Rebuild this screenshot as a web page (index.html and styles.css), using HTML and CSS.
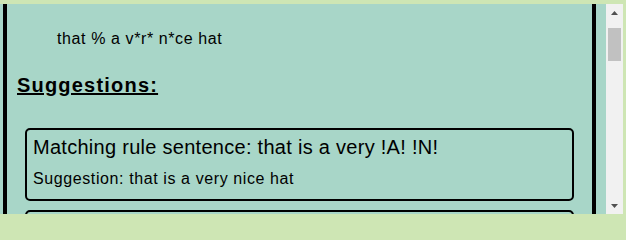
FILE: index.html
```html
<!DOCTYPE html>
<html>
<head>
<meta charset="utf-8">
<link rel="stylesheet" href="styles.css">
</head>
<body>
<div class="frame">
  <div class="viewport">
    <div class="panel">
      <blockquote class="input-line">that % a v*r* n*ce hat</blockquote>
      <h2 class="heading">Suggestions:</h2>
      <div class="suggestion">
        <div class="rule">Matching rule sentence: that is a very !A! !N!</div>
        <div class="result">Suggestion: that is a very nice hat</div>
      </div>
      <div class="suggestion suggestion-next"></div>
    </div>
  </div>
  <div class="scrollbar">
    <div class="arrow">
      <svg width="7" height="4" viewBox="0 0 7 4"><polygon points="3.5,0 7,4 0,4" fill="#505050"/></svg>
    </div>
    <div class="track"><div class="thumb"></div></div>
    <div class="arrow">
      <svg width="7" height="4" viewBox="0 0 7 4"><polygon points="0,0 7,0 3.5,4" fill="#505050"/></svg>
    </div>
  </div>
</div>
</body>
</html>
```

FILE: styles.css
```css
html, body {
  margin: 0;
  padding: 0;
  height: 218px;
  overflow: hidden;
}
body {
  background: #cee6b4;
  padding: 4px 3px 4px 0;
  box-sizing: border-box;
  font-family: "Liberation Sans", Arial, sans-serif;
  color: #000;
}
.frame {
  display: flex;
  height: 210px;
}
.viewport {
  flex: 1;
  overflow: hidden;
  background: #a8d6c8;
}
.panel {
  margin: -44px 10px 0 3px;
  border-left: 4px solid #000;
  border-right: 4px solid #000;
  padding: 70px 10px 0 10px;
  min-height: 1120px;
  box-sizing: border-box;
}
.input-line {
  margin: 0 0 0 40px;
  font-size: 16px;
  line-height: 18px;
  letter-spacing: 0.6px;
}
.heading {
  margin: 26px 0 0 0;
  font-size: 20px;
  line-height: 23px;
  font-weight: bold;
  letter-spacing: 1.2px;
  text-decoration: underline;
}
.suggestion {
  margin: 31px 8px 0 8px;
  border: 2px solid #000;
  border-radius: 5px;
  padding: 6px 6px 11px 6px;
}
.suggestion + .suggestion {
  margin-top: 9px;
}
.suggestion-next {
  height: 56px;
}
.rule {
  font-size: 20px;
  line-height: 23px;
  letter-spacing: 0.28px;
}
.result {
  margin-top: 11px;
  font-size: 16px;
  line-height: 18px;
  letter-spacing: 0.6px;
}
.scrollbar {
  width: 17px;
  background: #f1f1f1;
  display: flex;
  flex-direction: column;
}
.arrow {
  height: 17px;
  display: flex;
  align-items: center;
  justify-content: center;
}
.arrow svg {
  display: block;
}
.track {
  flex: 1;
  padding: 7px 2px 0 2px;
}
.thumb {
  height: 33px;
  background: #c1c1c1;
}
```
